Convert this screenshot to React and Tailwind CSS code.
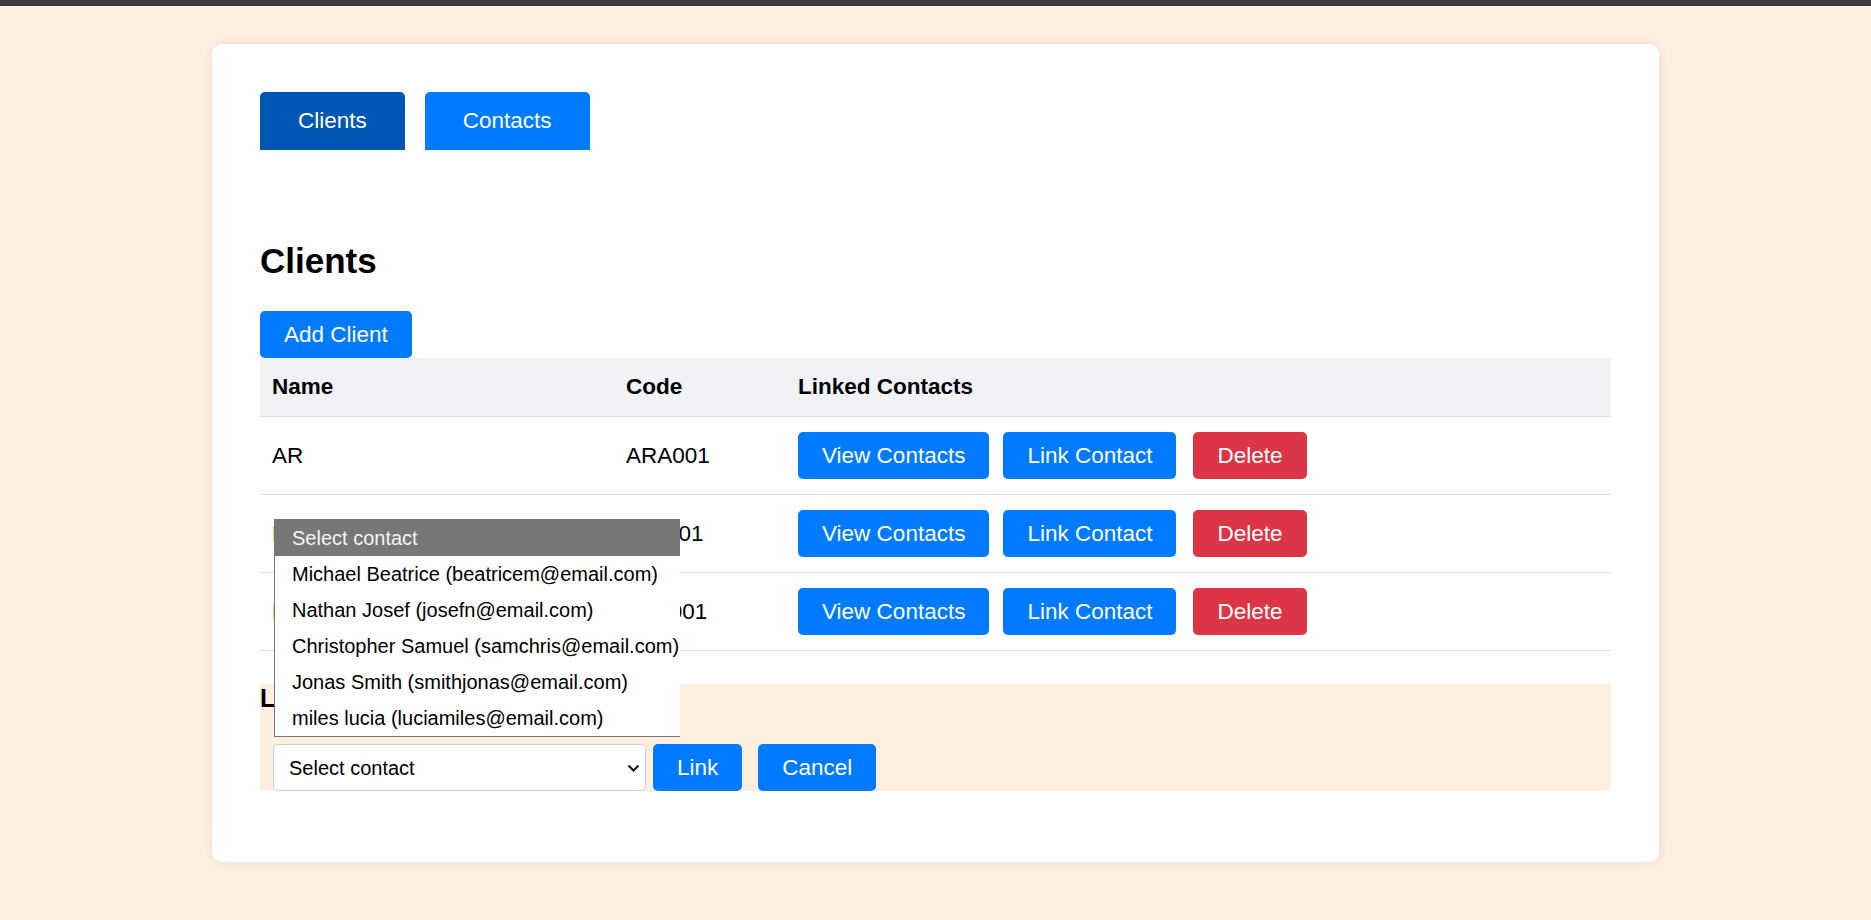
import { useState } from 'react'

const clients = [
  { name: 'AR', code: 'ARA001' },
  { name: 'FT', code: 'FTL001' },
  { name: 'ES', code: 'EST001' },
]

const contacts = [
  'Michael Beatrice (beatricem@email.com)',
  'Nathan Josef (josefn@email.com)',
  'Christopher Samuel (samchris@email.com)',
  'Jonas Smith (smithjonas@email.com)',
  'miles lucia (luciamiles@email.com)',
]

export default function App() {
  const [tab, setTab] = useState('clients')

  return (
    <div className="min-h-screen bg-[#feeee0] font-['Liberation_Sans',Arial,sans-serif] text-black">
      <div className="h-[6px] bg-[#3b3b3b]" />
      <div className="pt-[38px]">
        <div className="relative mx-auto w-[1447px] rounded-[10px] bg-white p-[48px] pb-[71px] shadow-[0_0_12px_rgba(0,0,0,0.07)]">
          <div className="flex gap-[20px]">
            <TabButton active={tab === 'clients'} onClick={() => setTab('clients')}>Clients</TabButton>
            <TabButton active={tab === 'contacts'} onClick={() => setTab('contacts')}>Contacts</TabButton>
          </div>

          <h2 className="mt-[91px] text-[35px] font-bold leading-[39px]">Clients</h2>

          <button className="mt-[31px] h-[47px] rounded-[5px] bg-[#007bff] px-[24px] text-[22.5px] text-white">
            Add Client
          </button>

          <div className="text-[22.5px]">
            <div className="grid h-[59px] grid-cols-[354px_172px_1fr] items-center border-b border-[#dee2e6] bg-[#f1f2f6] font-bold">
              <div className="px-3">Name</div>
              <div className="px-3">Code</div>
              <div className="px-3">Linked Contacts</div>
            </div>
            {clients.map(c => (
              <div key={c.code} className="grid h-[78px] grid-cols-[354px_172px_1fr] items-center border-b border-[#e0e0e0]">
                <div className="px-3">{c.name}</div>
                <div className="px-3">{c.code}</div>
                <div className="flex px-3">
                  <ActionButton>View Contacts</ActionButton>
                  <ActionButton className="ml-[14px]">Link Contact</ActionButton>
                  <ActionButton className="ml-[17px] bg-[#dc3545]">Delete</ActionButton>
                </div>
              </div>
            ))}
          </div>

          <div className="mt-[33px] bg-[#feeee0]">
            <h3 className="text-[25px] font-bold leading-[29px]">Link Contact to Client</h3>
            <div className="mt-[31px] ml-[13px] flex items-center">
              <div className="relative h-[47px] w-[373px]">
                <select className="h-full w-full appearance-none rounded-[5px] border border-[#cccccc] bg-white pl-[15px] text-[20px] text-black">
                  <option>Select contact</option>
                  {contacts.map(c => <option key={c}>{c}</option>)}
                </select>
                <svg className="pointer-events-none absolute right-[6px] top-[20px]" width="13" height="8" viewBox="0 0 13 8" fill="none">
                  <path d="M1.5 1.5 L6.5 6.5 L11.5 1.5" stroke="#111" strokeWidth="2" />
                </svg>
              </div>
              <ActionButton className="ml-[7px]">Link</ActionButton>
              <ActionButton className="ml-[16px]">Cancel</ActionButton>
            </div>
          </div>

          {/* open dropdown list of the select above */}
          <div className="absolute left-[62px] top-[475px] w-[406px] border border-r-0 border-[#767676] bg-white text-[20px]">
            <div className="flex h-[36px] items-center bg-[#777777] pl-[17px] text-[#f4f4f4]">Select contact</div>
            {contacts.map(c => (
              <div key={c} className="flex h-[36px] items-center pl-[17px] text-black">{c}</div>
            ))}
          </div>
        </div>
      </div>
    </div>
  )
}

function TabButton({ active, onClick, children }) {
  return (
    <button
      onClick={onClick}
      className={
        active
          ? 'h-[58px] rounded-t-[5px] bg-[#0056b3] px-[38px] text-[22.5px] text-white'
          : 'h-[58px] rounded-t-[5px] bg-[#007bff] px-[38px] text-[22.5px] text-white'
      }
    >
      {children}
    </button>
  )
}

function ActionButton({ className = 'bg-[#007bff]', children }) {
  const bg = className.includes('bg-') ? '' : 'bg-[#007bff]'
  return (
    <button className={`h-[47px] rounded-[5px] px-[24px] text-[22.5px] text-white ${bg} ${className}`}>
      {children}
    </button>
  )
}
